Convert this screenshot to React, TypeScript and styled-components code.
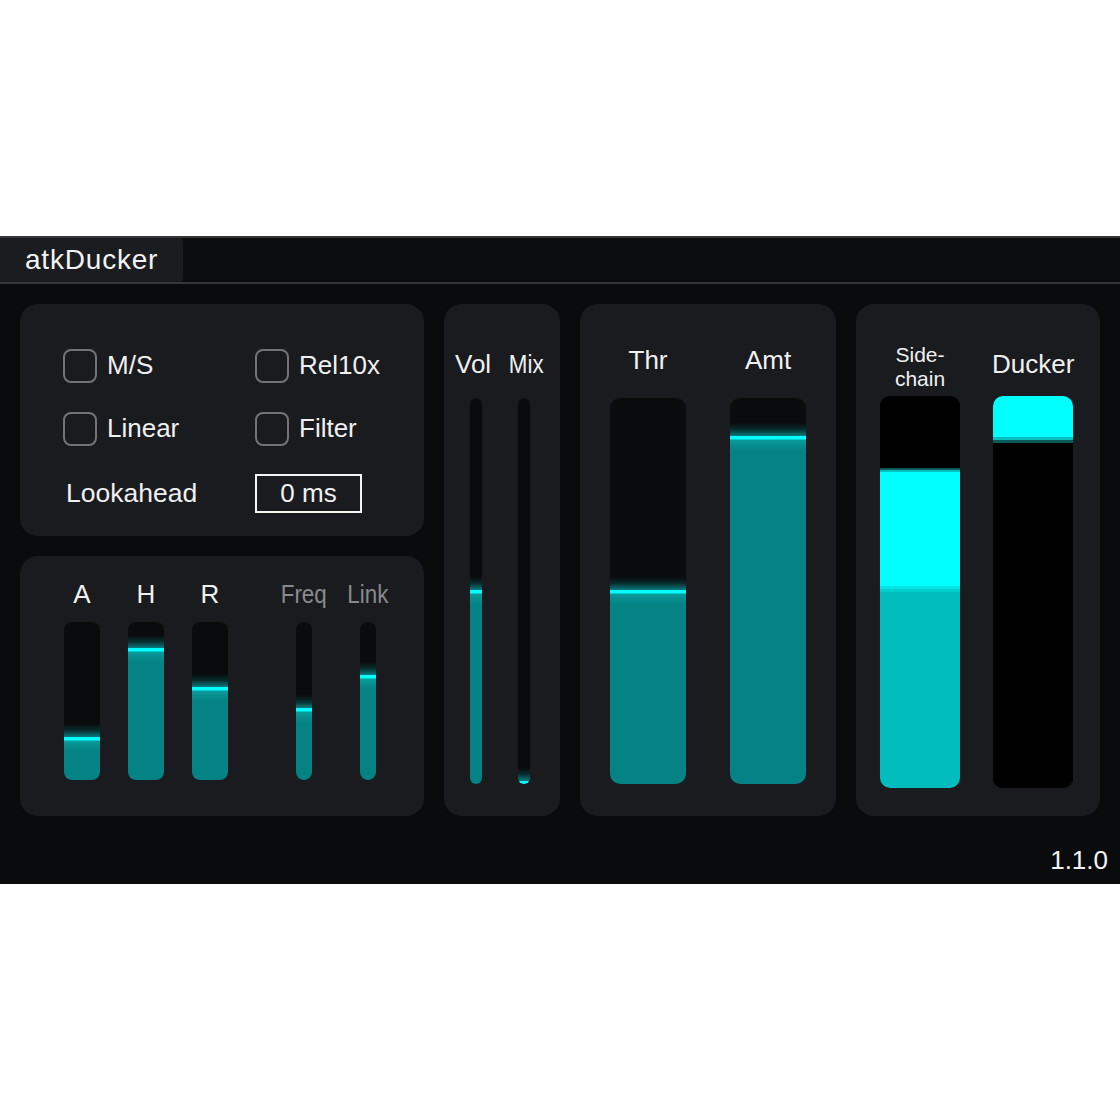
import React from "react";
import styled, { createGlobalStyle } from "styled-components";

const GlobalStyle = createGlobalStyle`
  html, body {
    margin: 0;
    padding: 0;
    background: #ffffff;
  }
  body {
    font-family: "Liberation Sans", Arial, sans-serif;
  }
`;

const Page = styled.div`
  width: 1120px;
  padding-top: 236px;
  background: #ffffff;
`;

const Plugin = styled.div`
  height: 648px;
  background: #0a0b0d;
  color: #f0f0f0;
  display: flex;
  flex-direction: column;
  font-family: "Liberation Sans", Arial, sans-serif;
`;

const TopBar = styled.div`
  height: 44px;
  background: #0b0c0e;
  border-top: 2px solid #35363a;
  border-bottom: 2px solid #35363a;
  display: flex;
`;

const Tab = styled.div`
  width: 158px;
  padding-left: 25px;
  background: #1b1c20;
  border-radius: 0 4px 4px 0;
  font-size: 28px;
  letter-spacing: 0.8px;
  line-height: 44px;
  color: #f2f2f2;
`;

const Body = styled.div`
  display: flex;
  gap: 20px;
  padding: 20px 20px 0;
  height: 512px;
`;

const Column = styled.div`
  display: flex;
  flex-direction: column;
  gap: 20px;
  width: 404px;
`;

const Panel = styled.div<{ $w?: number; $h?: number }>`
  background: #1a1b1f;
  border-radius: 18px;
  width: ${(p) => (p.$w ? `${p.$w}px` : "auto")};
  height: ${(p) => (p.$h ? `${p.$h}px` : "auto")};
  box-sizing: border-box;
`;

/* options panel */
const Options = styled(Panel)`
  display: grid;
  grid-template-columns: 192px auto;
  grid-auto-rows: 35px 35px 39px;
  row-gap: 28px;
  align-items: center;
  padding: 44px 0 0 43px;
`;

const CheckRow = styled.label`
  display: flex;
  align-items: center;
  gap: 10px;
  font-size: 26px;
`;

const Box = styled.span`
  width: 30px;
  height: 30px;
  border: 2.5px solid #737376;
  border-radius: 8px;
`;

const FieldLabel = styled.span`
  font-size: 26.5px;
  padding-left: 3px;
`;

const ValueBox = styled.div`
  width: 103px;
  height: 35px;
  border: 2px solid #f4f4f4;
  display: flex;
  align-items: center;
  justify-content: center;
  font-size: 26px;
`;

/* sliders */
const Track = styled.div<{ $w: number; $h: number; $r: number }>`
  position: relative;
  width: ${(p) => p.$w}px;
  height: ${(p) => p.$h}px;
  background: #0a0b0d;
  border-radius: ${(p) => p.$r}px;
  overflow: hidden;
`;

const Fill = styled.div`
  position: absolute;
  left: 0;
  right: 0;
  bottom: 0;
  background: linear-gradient(
    to bottom,
    #00ffff 0px,
    #00ffff 3px,
    #0a9c9c 4px,
    #078e8f 9px,
    #058384 14px,
    #058384 100%
  );
  &::before {
    content: "";
    position: absolute;
    left: 0;
    right: 0;
    bottom: 100%;
    height: 13px;
    background: linear-gradient(to top, rgba(8, 130, 132, 0.95), rgba(6, 110, 112, 0.35) 50%, rgba(6, 120, 122, 0));
  }
`;

const Slider = ({ w, h, r, level }: { w: number; h: number; r: number; level: number }) => (
  <Track $w={w} $h={h} $r={r}>
    <Fill style={{ height: level }} />
  </Track>
);

const Label = styled.div<{ $muted?: boolean; $narrow?: boolean }>`
  font-size: 26px;
  line-height: 30px;
  color: ${(p) => (p.$muted ? "#8a8a8d" : "#f0f0f0")};
  transform: ${(p) => (p.$narrow ? "scaleX(0.86)" : "none")};
  white-space: nowrap;
`;

const Envelope = styled(Panel)`
  display: flex;
  padding: 23px 24px 0 30px;
`;

const SliderCol = styled.div<{ $w: number }>`
  width: ${(p) => p.$w}px;
  display: flex;
  flex-direction: column;
  align-items: center;
  gap: 13px;
`;

const Spacer = styled.div<{ $w: number }>`
  width: ${(p) => p.$w}px;
`;

/* vol / mix */
const VolPanel = styled(Panel)`
  padding-top: 45px;
  display: flex;
  flex-direction: column;
  gap: 19px;
`;

const LabelRow = styled.div`
  display: flex;
  justify-content: space-between;
  padding: 0 14px 0 11px;
`;

const SliderRow = styled.div<{ $gap: number; $pad?: string }>`
  display: flex;
  justify-content: center;
  gap: ${(p) => p.$gap}px;
  padding: ${(p) => p.$pad || "0"};
`;

/* thr / amt */
const ThrPanel = styled(Panel)`
  display: flex;
  gap: 44px;
  padding: 41px 30px 0;
`;

const BigCol = styled.div`
  display: flex;
  flex-direction: column;
  align-items: center;
  gap: 23px;
`;

/* meters */
const MeterPanel = styled(Panel)`
  display: flex;
  gap: 32px;
  padding: 38px 28px 0 24px;
`;

const MeterCol = styled.div`
  display: flex;
  flex-direction: column;
  align-items: center;
`;

const MeterHead = styled.div`
  height: 54px;
`;

const SmallLabel = styled.div`
  font-size: 21px;
  line-height: 24px;
  text-align: center;
  margin-top: 1px;
`;

const DuckLabel = styled(Label)`
  margin-top: 7px;
`;

const Meter = styled.div`
  width: 80px;
  height: 392px;
  border-radius: 10px;
  overflow: hidden;
  display: flex;
  flex-direction: column;
  background: #000000;
`;

const Seg = styled.div<{ $c: string; $h?: number }>`
  background: ${(p) => p.$c};
  height: ${(p) => (p.$h ? `${p.$h}px` : "auto")};
  flex: ${(p) => (p.$h ? "none" : "1")};
`;

const Footer = styled.div`
  display: flex;
  justify-content: flex-end;
  padding: 29px 12px 0 0;
  font-size: 26px;
  line-height: 30px;
  color: #f4f4f4;
`;

export default function App() {
  return (
    <Page>
      <GlobalStyle />
      <Plugin>
        <TopBar>
          <Tab>atkDucker</Tab>
        </TopBar>
        <Body>
          <Column>
            <Options $h={232}>
              <CheckRow>
                <Box />
                M/S
              </CheckRow>
              <CheckRow>
                <Box />
                Rel10x
              </CheckRow>
              <CheckRow>
                <Box />
                Linear
              </CheckRow>
              <CheckRow>
                <Box />
                Filter
              </CheckRow>
              <FieldLabel>Lookahead</FieldLabel>
              <ValueBox>0 ms</ValueBox>
            </Options>
            <Envelope $h={260}>
              <SliderCol $w={64}>
                <Label>A</Label>
                <Slider w={36} h={158} r={8} level={43} />
              </SliderCol>
              <SliderCol $w={64}>
                <Label>H</Label>
                <Slider w={36} h={158} r={8} level={132} />
              </SliderCol>
              <SliderCol $w={64}>
                <Label>R</Label>
                <Slider w={36} h={158} r={8} level={93} />
              </SliderCol>
              <Spacer $w={30} />
              <SliderCol $w={64}>
                <Label $muted $narrow>Freq</Label>
                <Slider w={16} h={158} r={8} level={72} />
              </SliderCol>
              <SliderCol $w={64}>
                <Label $muted $narrow>Link</Label>
                <Slider w={16} h={158} r={8} level={105} />
              </SliderCol>
            </Envelope>
          </Column>

          <VolPanel $w={116} $h={512}>
            <LabelRow>
              <Label>Vol</Label>
              <Label $narrow>Mix</Label>
            </LabelRow>
            <SliderRow $gap={36} $pad="0 4px 0 0">
              <Slider w={12} h={386} r={6} level={194} />
              <Slider w={12} h={386} r={6} level={3} />
            </SliderRow>
          </VolPanel>

          <ThrPanel $w={256} $h={512}>
            <BigCol>
              <Label>Thr</Label>
              <Slider w={76} h={386} r={10} level={194} />
            </BigCol>
            <BigCol>
              <Label>Amt</Label>
              <Slider w={76} h={386} r={10} level={348} />
            </BigCol>
          </ThrPanel>

          <MeterPanel $w={244} $h={512}>
            <MeterCol>
              <MeterHead>
                <SmallLabel>
                  Side-
                  <br />
                  chain
                </SmallLabel>
              </MeterHead>
              <Meter>
                <Seg $c="#000000" $h={72} />
                <Seg $c="#0b5c5d" $h={2} />
                <Seg $c="#00c2c2" $h={2} />
                <Seg $c="#00ffff" $h={114} />
                <Seg $c="#00e6e6" $h={3} />
                <Seg $c="#00cdcd" $h={3} />
                <Seg $c="#00bcbc" />
              </Meter>
            </MeterCol>
            <MeterCol>
              <MeterHead>
                <DuckLabel>Ducker</DuckLabel>
              </MeterHead>
              <Meter>
                <Seg $c="#00ffff" $h={41} />
                <Seg $c="#00c0c0" $h={3} />
                <Seg $c="#0a5a5a" $h={3} />
                <Seg $c="#000000" />
              </Meter>
            </MeterCol>
          </MeterPanel>
        </Body>
        <Footer>1.1.0</Footer>
      </Plugin>
    </Page>
  );
}
